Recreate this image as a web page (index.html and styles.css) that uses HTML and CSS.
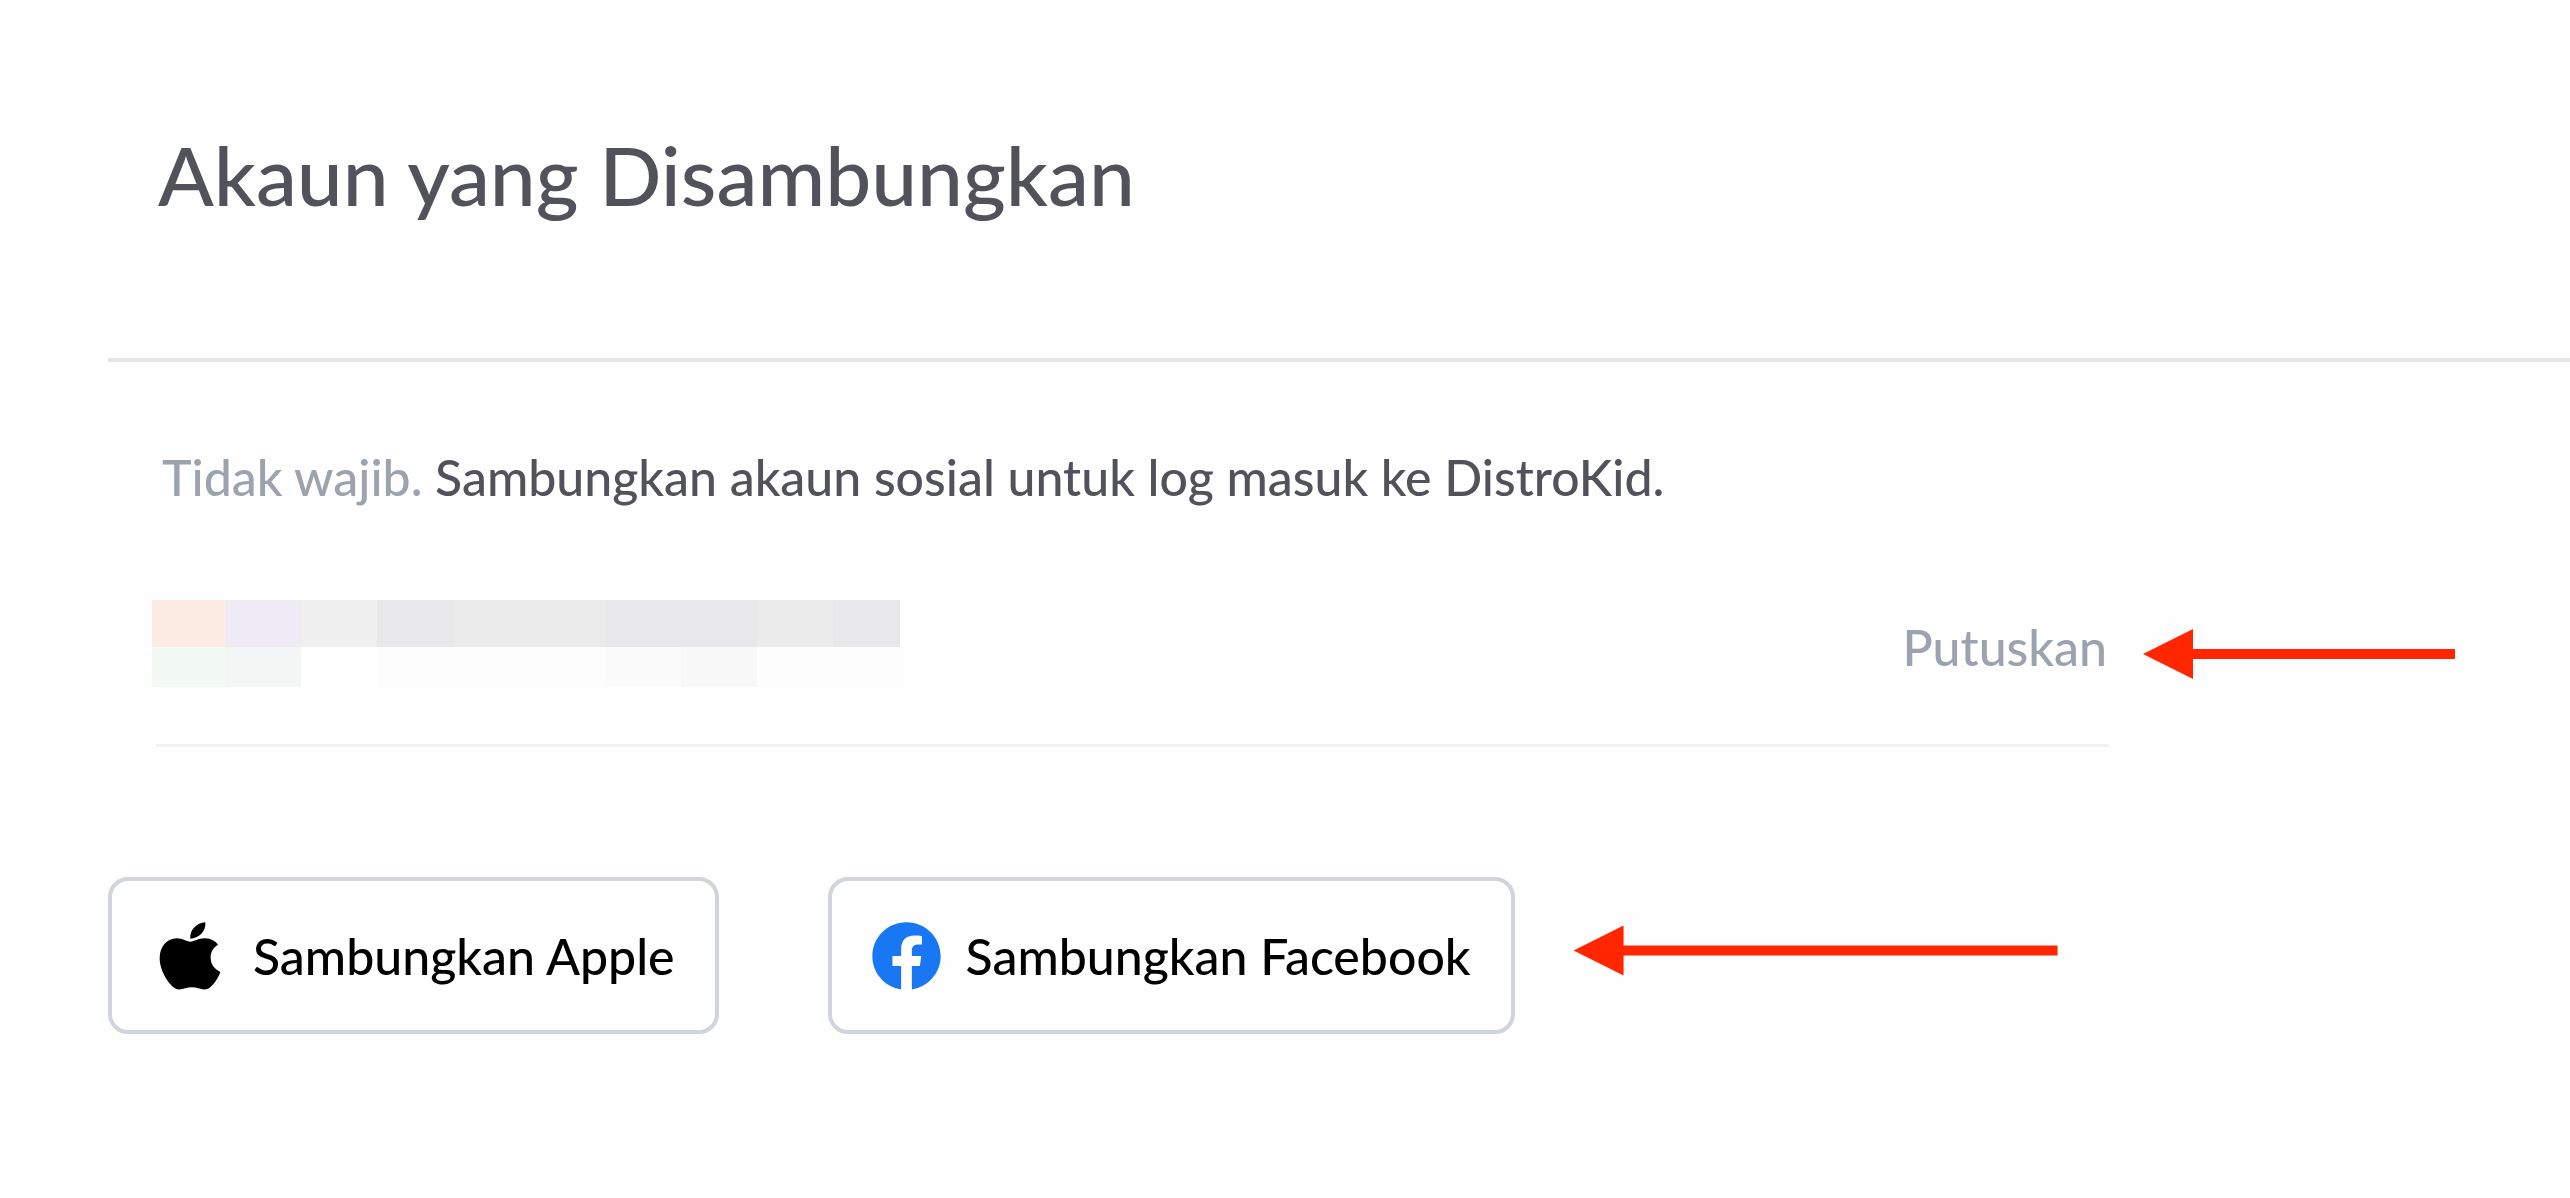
FILE: index.html
```html
<!DOCTYPE html>
<html lang="ms">

<head>
    <meta charset="UTF-8">
    <meta name="viewport" content="width=device-width, initial-scale=1.0">
    <title>Akaun yang Disambungkan</title>
    <link rel="stylesheet" href="styles.css">
</head>

<body>
    <main class="page">
        <header class="header">
            <h1 class="title">Akaun yang Disambungkan</h1>
        </header>

        <section class="accounts">
            <p class="intro"><span class="optional">Tidak wajib.</span> Sambungkan akaun sosial untuk log masuk ke DistroKid.</p>

            <!-- Connected account, identity hidden -->
            <div class="account-row">
                <div class="account">
                    <div class="mosaic">
                        <span class="peach"></span><span class="lilac"></span><span class="g1"></span><span class="g3"></span><span class="g2"></span><span class="g2"></span><span class="g3"></span><span class="g3"></span><span class="g2"></span><span class="g3"></span>
                        <span class="mint"></span><span class="aqua"></span><span class="w1"></span><span class="w2"></span><span class="w2"></span><span class="w2"></span><span class="w3"></span><span class="w4"></span><span class="w2"></span><span class="w2"></span>
                    </div>
                    <button type="button" class="disconnect">Putuskan</button>
                </div>
                <div class="arrow"></div>
            </div>
        </section>

        <!-- Connect buttons -->
        <div class="connect">
            <button type="button" class="connect-btn">
                <svg class="icon icon-apple" viewBox="0 0 184 204" aria-hidden="true">
                    <path d="M93 50C90 24 112 3 138 1C141 26 120 49 93 50Z" />
                    <path d="M93 59C106 59 117 48 138 49C155 50 168 57 176 68C160 78 153 92 154 109C155 128 166 142 183 150C177 169 159 194 146 200C130 207 116 196 97 196C80 196 67 206 51 201C31 193 1 148 1 109C1 72 24 50 52 49C70 49 81 59 93 59Z" />
                </svg>
                Sambungkan Apple
            </button>
            <button type="button" class="connect-btn">
                <svg class="icon icon-facebook" viewBox="0 0 206 202" aria-hidden="true">
                    <path d="M87 201C37 193 1 152 1 102C1 45 46 0 103 0C160 0 205 45 205 102C205 152 168 193 119 201V131H143L147 101H119V86C119 73 125 67 138 67H149V42C142 40 134 40 126 40C101 40 87 55 87 80V101H61V131H87Z" />
                </svg>
                Sambungkan Facebook
            </button>
            <div class="arrow arrow-long"></div>
        </div>
    </main>
</body>

</html>
```
FILE: styles.css
```css
* {
    box-sizing: border-box;
}

body {
    margin: 0;
    background-color: #fefefe;
    color: #52525b;
    font-family: Lato, "Liberation Sans", sans-serif;
    font-size: 50px;
    font-weight: 500;
    line-height: 60px;
}

.page {
    padding: 124px 0 0 108px;
}

/* Header */
.header {
    padding: 0 50px 134px;
    border-bottom: 4px solid #e5e5e5;
}

.title {
    margin: 0;
    font-size: 82px;
    font-weight: 500;
    line-height: 100px;
}

/* Accounts */
.accounts {
    padding: 85px 115px 0 48px;
}

.intro {
    margin: 0;
    padding: 0 6px;
}

.optional {
    color: #9ca3af;
}

.account-row {
    display: flex;
    align-items: center;
    gap: 34px;
    margin-top: 54px;
}

.account {
    flex: 1;
    display: flex;
    justify-content: space-between;
    align-items: center;
    padding: 39px 2px 57px 0;
    border-bottom: 3px solid #f2f2f2;
}

.mosaic {
    display: grid;
    grid-template-columns: 73px repeat(8, 76px) 67px;
    grid-template-rows: 47px 40px;
    margin-left: -4px;
}

.peach { background-color: #fdece3; }
.lilac { background-color: #eeebf6; }
.mint { background-color: #f3f9f5; }
.aqua { background-color: #f2f7f6; }
.g1 { background-color: #f0f0f0; }
.g2 { background-color: #ebebeb; }
.g3 { background-color: #e8e8ea; }
.w1 { background-color: #ffffff; }
.w2 { background-color: #fdfdfd; }
.w3 { background-color: #fbfbfb; }
.w4 { background-color: #f8f8f8; }

.disconnect {
    padding: 6px 0 0;
    border: none;
    background: none;
    color: #9ca3af;
    font: inherit;
    cursor: pointer;
}

/* Connect buttons */
.connect {
    display: flex;
    align-items: center;
    gap: 109px;
    padding-top: 130px;
}

.connect-btn {
    display: flex;
    align-items: center;
    height: 157px;
    padding: 0 40px;
    border: 4px solid #d1d5db;
    border-radius: 20px;
    background-color: #fefefe;
    color: #000;
    font: inherit;
    cursor: pointer;
}

.icon {
    height: 68px;
    margin-right: 25px;
}

.icon-apple {
    width: 76px;
}

.icon-facebook {
    width: 69px;
    fill: #1977f3;
}

/* Red pointer arrows */
.arrow {
    width: 312px;
    height: 50px;
    background-color: #ff2600;
    clip-path: polygon(0 50%, 50px 0, 50px 20px, 100% 20px, 100% 30px, 50px 30px, 50px 100%);
}

.arrow-long {
    width: 484px;
    margin: 0 0 10px -50px;
}
```
